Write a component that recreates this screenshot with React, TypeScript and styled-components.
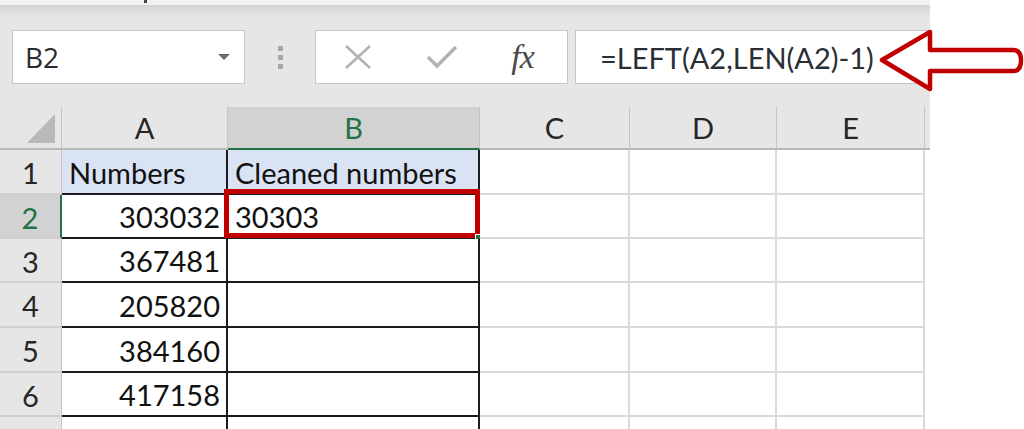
import React from 'react';
import styled, { createGlobalStyle, css } from 'styled-components';

const GlobalStyle = createGlobalStyle`
  html, body {
    margin: 0;
    padding: 0;
    background: #ffffff;
  }
  * {
    box-sizing: border-box;
  }
`;

const CELL_FONT = `Lato, "Liberation Sans", sans-serif`;
const UI_FONT = `"Open Sans", "Liberation Sans", sans-serif`;
const GREEN = '#217346';
const RED = '#c00000';

const Page = styled.div`
  position: relative;
  width: 1024px;
  height: 429px;
  overflow: hidden;
  background: #ffffff;
`;

const Window = styled.div`
  width: 930px;
  height: 100%;
  display: flex;
  flex-direction: column;
  background: #e6e6e6;
`;

const TopStrip = styled.div`
  position: relative;
  flex-shrink: 0;
  height: 5px;
  background: #f3f2f1;
  &::after {
    content: '';
    position: absolute;
    left: 144px;
    top: 0;
    width: 3px;
    height: 3px;
    background: #444;
  }
`;

const FormulaBar = styled.div`
  display: flex;
  flex-shrink: 0;
  align-items: center;
  height: 102px;
  padding: 25px 0 23px 12px;
  background: linear-gradient(#d4d4d4 0px, #e6e6e6 12px);
`;

const Field = styled.div`
  height: 54px;
  background: #ffffff;
  border: 1px solid #c6c6c6;
  display: flex;
  align-items: center;
`;

const NameBox = styled(Field)`
  width: 233px;
  padding: 0 14px 0 12px;
  justify-content: space-between;
  font-family: ${UI_FONT};
  font-size: 28px;
  color: #2b2b2b;
`;

const DropArrow = styled.span`
  width: 0;
  height: 0;
  border-left: 6px solid transparent;
  border-right: 6px solid transparent;
  border-top: 6px solid #6b6b6b;
`;

const Grip = styled.div`
  width: 70px;
  display: flex;
  flex-direction: column;
  align-items: center;
  gap: 4px;
  span {
    width: 5px;
    height: 5px;
    background: #a8a8a8;
  }
`;

const ButtonBox = styled(Field)`
  width: 253px;
  display: grid;
  grid-template-columns: 84px 84px 85px;
  align-items: center;
  justify-items: center;
`;

const FxLabel = styled.span`
  font-family: "Liberation Serif", serif;
  font-style: italic;
  font-size: 34px;
  color: #4a4a4a;
  margin-right: 8px;
  letter-spacing: -1px;
`;

const FormulaInput = styled(Field)`
  flex: 1;
  margin-left: 7px;
  border-right: none;
  padding-left: 24px;
  font-family: ${CELL_FONT};
  font-size: 29px;
  color: #2a2f36;
`;

const Sheet = styled.div`
  display: grid;
  grid-template-columns: 62px 166px 252px 150px 147px 148px 5px;
  grid-template-rows: 43px 45px 44px 44px 45px 45px 44px 44px;
  flex: 1;
  min-height: 0;
  overflow: hidden;
  background: #ffffff;
  font-family: ${CELL_FONT};
  font-size: 29px;
  color: #111111;
`;

const ColHead = styled.div<{ active?: boolean }>`
  display: flex;
  align-items: center;
  justify-content: center;
  background: ${(p) => (p.active ? '#d2d2d2' : '#e6e6e6')};
  color: ${(p) => (p.active ? GREEN : '#262626')};
  border-right: 1px solid #c4c4c4;
  border-bottom: 2px solid ${(p) => (p.active ? GREEN : '#b8b8b8')};
`;

const Corner = styled.div`
  position: relative;
  background: #e6e6e6;
  border-right: 1px solid #c4c4c4;
  border-bottom: 2px solid #b8b8b8;
  &::after {
    content: '';
    position: absolute;
    right: 6px;
    bottom: 5px;
    width: 0;
    height: 0;
    border-left: 28px solid transparent;
    border-bottom: 29px solid #b9b9b9;
  }
`;

const HeadFiller = styled.div`
  background: #e6e6e6;
  border-bottom: 2px solid #b8b8b8;
`;

const RowHead = styled.div<{ active?: boolean }>`
  display: flex;
  align-items: center;
  justify-content: center;
  padding-top: 2px;
  background: ${(p) => (p.active ? '#d2d2d2' : '#e6e6e6')};
  color: ${(p) => (p.active ? GREEN : '#262626')};
  border-bottom: 2px solid #d0d0d0;
  border-right: ${(p) => (p.active ? `2px solid ${GREEN}` : '1px solid #c4c4c4')};
`;

const Cell = styled.div<{ boxed?: boolean; fill?: boolean; align?: 'left' | 'right' }>`
  position: relative;
  display: flex;
  align-items: flex-end;
  justify-content: ${(p) => (p.align === 'right' ? 'flex-end' : 'flex-start')};
  padding: 0 6px 3px 7px;
  white-space: nowrap;
  background: ${(p) => (p.fill ? '#dae3f3' : '#ffffff')};
  border-right: 2px solid #dadada;
  border-bottom: 2px solid #dadada;
  ${(p) =>
    p.boxed &&
    css`
      border-right-color: #1c1c1c;
      border-bottom-color: #1c1c1c;
    `}
`;

const RowFiller = styled.div`
  background: #ffffff;
`;

const Callout = styled.div`
  position: absolute;
  left: -4px;
  top: -6px;
  right: -2px;
  bottom: -1px;
  border: 5px solid ${RED};
  pointer-events: none;
`;

const FillHandle = styled.div`
  position: absolute;
  right: -5px;
  bottom: -5px;
  width: 8px;
  height: 8px;
  background: ${GREEN};
  border: 1px solid #ffffff;
`;

const ArrowOverlay = styled.svg`
  position: absolute;
  left: 0;
  top: 0;
  pointer-events: none;
`;

const XIcon = () => (
  <svg width="30" height="26" viewBox="0 0 30 26">
    <path d="M3 2 L27 24 M27 2 L3 24" stroke="#b3b3b3" strokeWidth="2.6" fill="none" />
  </svg>
);

const CheckIcon = () => (
  <svg width="32" height="26" viewBox="0 0 32 26">
    <path d="M2 13 L11 22 L30 3" stroke="#b3b3b3" strokeWidth="3.4" fill="none" />
  </svg>
);

const columns = ['A', 'B', 'C', 'D', 'E'];
const numbers = ['303032', '367481', '205820', '384160', '417158'];

export default function App() {
  return (
    <Page>
      <GlobalStyle />
      <Window>
        <TopStrip />
        <FormulaBar>
          <NameBox>
            <span>B2</span>
            <DropArrow />
          </NameBox>
          <Grip>
            <span />
            <span />
            <span />
          </Grip>
          <ButtonBox>
            <XIcon />
            <CheckIcon />
            <FxLabel>fx</FxLabel>
          </ButtonBox>
          <FormulaInput>=LEFT(A2,LEN(A2)-1)</FormulaInput>
        </FormulaBar>
        <Sheet>
          <Corner />
          {columns.map((c) => (
            <ColHead key={c} active={c === 'B'}>
              {c}
            </ColHead>
          ))}
          <HeadFiller />

          <RowHead>1</RowHead>
          <Cell boxed fill>Numbers</Cell>
          <Cell boxed fill>Cleaned numbers</Cell>
          <Cell />
          <Cell />
          <Cell />
          <RowFiller />

          {numbers.map((n, i) => (
            <React.Fragment key={n}>
              <RowHead active={i === 0}>{i + 2}</RowHead>
              <Cell boxed align="right">{n}</Cell>
              <Cell boxed>
                {i === 0 && '30303'}
                {i === 0 && (
                  <>
                    <Callout />
                    <FillHandle />
                  </>
                )}
              </Cell>
              <Cell />
              <Cell />
              <Cell />
              <RowFiller />
            </React.Fragment>
          ))}

          {/* row 7 sits below the window edge; only its top strip shows */}
          <RowHead />
          <Cell boxed />
          <Cell boxed />
          <Cell />
          <Cell />
          <Cell />
          <RowFiller />
        </Sheet>
      </Window>
      <ArrowOverlay width="1024" height="429" viewBox="0 0 1024 429">
        <path
          d="M882 60 L930 32 L930 50 L1013 50 Q1021 50 1021 60.5 Q1021 71 1013 71 L930 71 L930 89 Z"
          fill="#ffffff"
          stroke={RED}
          strokeWidth="4.5"
          strokeLinejoin="round"
        />
      </ArrowOverlay>
    </Page>
  );
}
